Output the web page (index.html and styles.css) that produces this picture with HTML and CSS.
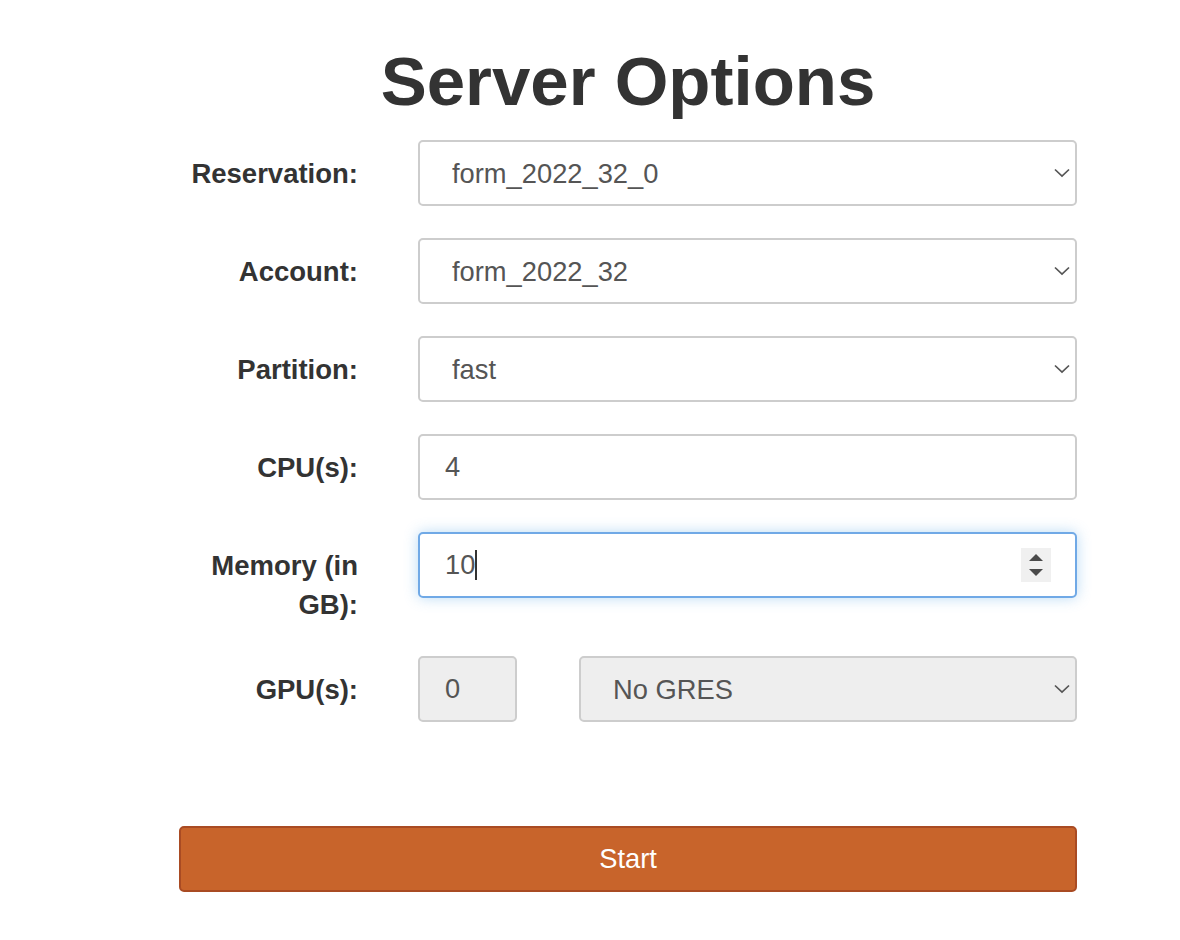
FILE: index.html
```html
<!DOCTYPE html>
<html lang="en">
<head>
<meta charset="utf-8">
<title>Server Options</title>
<link rel="stylesheet" href="styles.css">
</head>
<body>
<div class="page">
  <h1 class="title">Server Options</h1>
  <form class="form">
    <div class="row">
      <label class="label">Reservation:</label>
      <div class="control">
        <div class="select-wrap">
          <select class="field select"><option>form_2022_32_0</option></select>
          <svg class="chev" width="16" height="10" viewBox="0 0 16 10"><path d="M1 1.5 L8 8 L15 1.5" fill="none" stroke="#555" stroke-width="1.7"/></svg>
        </div>
      </div>
    </div>
    <div class="row">
      <label class="label">Account:</label>
      <div class="control">
        <div class="select-wrap">
          <select class="field select"><option>form_2022_32</option></select>
          <svg class="chev" width="16" height="10" viewBox="0 0 16 10"><path d="M1 1.5 L8 8 L15 1.5" fill="none" stroke="#555" stroke-width="1.7"/></svg>
        </div>
      </div>
    </div>
    <div class="row">
      <label class="label">Partition:</label>
      <div class="control">
        <div class="select-wrap">
          <select class="field select"><option>fast</option></select>
          <svg class="chev" width="16" height="10" viewBox="0 0 16 10"><path d="M1 1.5 L8 8 L15 1.5" fill="none" stroke="#555" stroke-width="1.7"/></svg>
        </div>
      </div>
    </div>
    <div class="row">
      <label class="label">CPU(s):</label>
      <div class="control">
        <input class="field input" type="text" value="4">
      </div>
    </div>
    <div class="row">
      <label class="label">Memory (in GB):</label>
      <div class="control">
        <div class="field input focused">
          <span class="val">10</span><span class="caret"></span>
          <span class="spinner">
            <svg width="30" height="34" viewBox="0 0 30 34"><path d="M8 13 L15 6 L22 13 Z" fill="#4a4a4a"/><path d="M8 21 L22 21 L15 28 Z" fill="#4a4a4a"/></svg>
          </span>
        </div>
      </div>
    </div>
    <div class="row">
      <label class="label">GPU(s):</label>
      <div class="control gpu">
        <input class="field input small disabled" type="text" value="0">
        <div class="select-wrap grow">
          <select class="field select disabled"><option>No GRES</option></select>
          <svg class="chev" width="16" height="10" viewBox="0 0 16 10"><path d="M1 1.5 L8 8 L15 1.5" fill="none" stroke="#555" stroke-width="1.7"/></svg>
        </div>
      </div>
    </div>
    <button class="start" type="button">Start</button>
  </form>
</div>
</body>
</html>
```

FILE: styles.css
```css
html, body {
  margin: 0;
  padding: 0;
  background: #fff;
}
body {
  font-family: "Liberation Sans", Arial, Helvetica, sans-serif;
  color: #333;
}
.page {
  margin-left: 179px;
  width: 898px;
  padding-top: 8px;
}
.title {
  margin: 36px 0 20px;
  font-size: 69px;
  line-height: 76px;
  font-weight: bold;
  text-align: center;
  color: #333;
}
.form {
  display: flex;
  flex-direction: column;
  gap: 32px;
}
.row {
  display: grid;
  grid-template-columns: 179px 659px;
  column-gap: 60px;
  align-items: start;
}
.label {
  padding-top: 14px;
  font-size: 27.5px;
  line-height: 39px;
  font-weight: bold;
  text-align: right;
  color: #333;
}
.control {
  display: flex;
}
.control.gpu {
  gap: 62px;
}
.select-wrap {
  position: relative;
  width: 100%;
}
.select-wrap.grow {
  flex: 1;
}
.field {
  box-sizing: border-box;
  width: 100%;
  height: 66px;
  margin: 0;
  border: 2px solid #cdcdcd;
  border-radius: 5px;
  background: #fff;
  font-family: "Liberation Sans", Arial, Helvetica, sans-serif;
  font-size: 27.3px;
  color: #555;
  outline: none;
}
.select {
  appearance: none;
  -webkit-appearance: none;
  padding: 0 40px 0 32px;
}
.input {
  padding: 0 0 0 25px;
}
.input.small {
  width: 99px;
  flex: none;
}
.disabled {
  background: #eeeeee;
}
.chev {
  position: absolute;
  right: 7px;
  top: 28px;
  pointer-events: none;
}
.focused {
  display: flex;
  align-items: center;
  border-color: #70a9e6;
  box-shadow: 0 0 14px rgba(102, 175, 233, 0.45);
}
.val {
  line-height: 1;
}
.caret {
  width: 1.5px;
  height: 30px;
  margin-left: 0;
  background: #333;
}
.spinner {
  margin-left: auto;
  margin-right: 24px;
  width: 30px;
  height: 34px;
  background: #f0f0f0;
  display: flex;
}
.start {
  margin-top: 72px;
  height: 66px;
  width: 100%;
  border: 2px solid #a94b23;
  border-radius: 5px;
  background: #c8642b;
  color: #fff;
  font-family: "Liberation Sans", Arial, Helvetica, sans-serif;
  font-size: 27.3px;
  cursor: pointer;
}
```
